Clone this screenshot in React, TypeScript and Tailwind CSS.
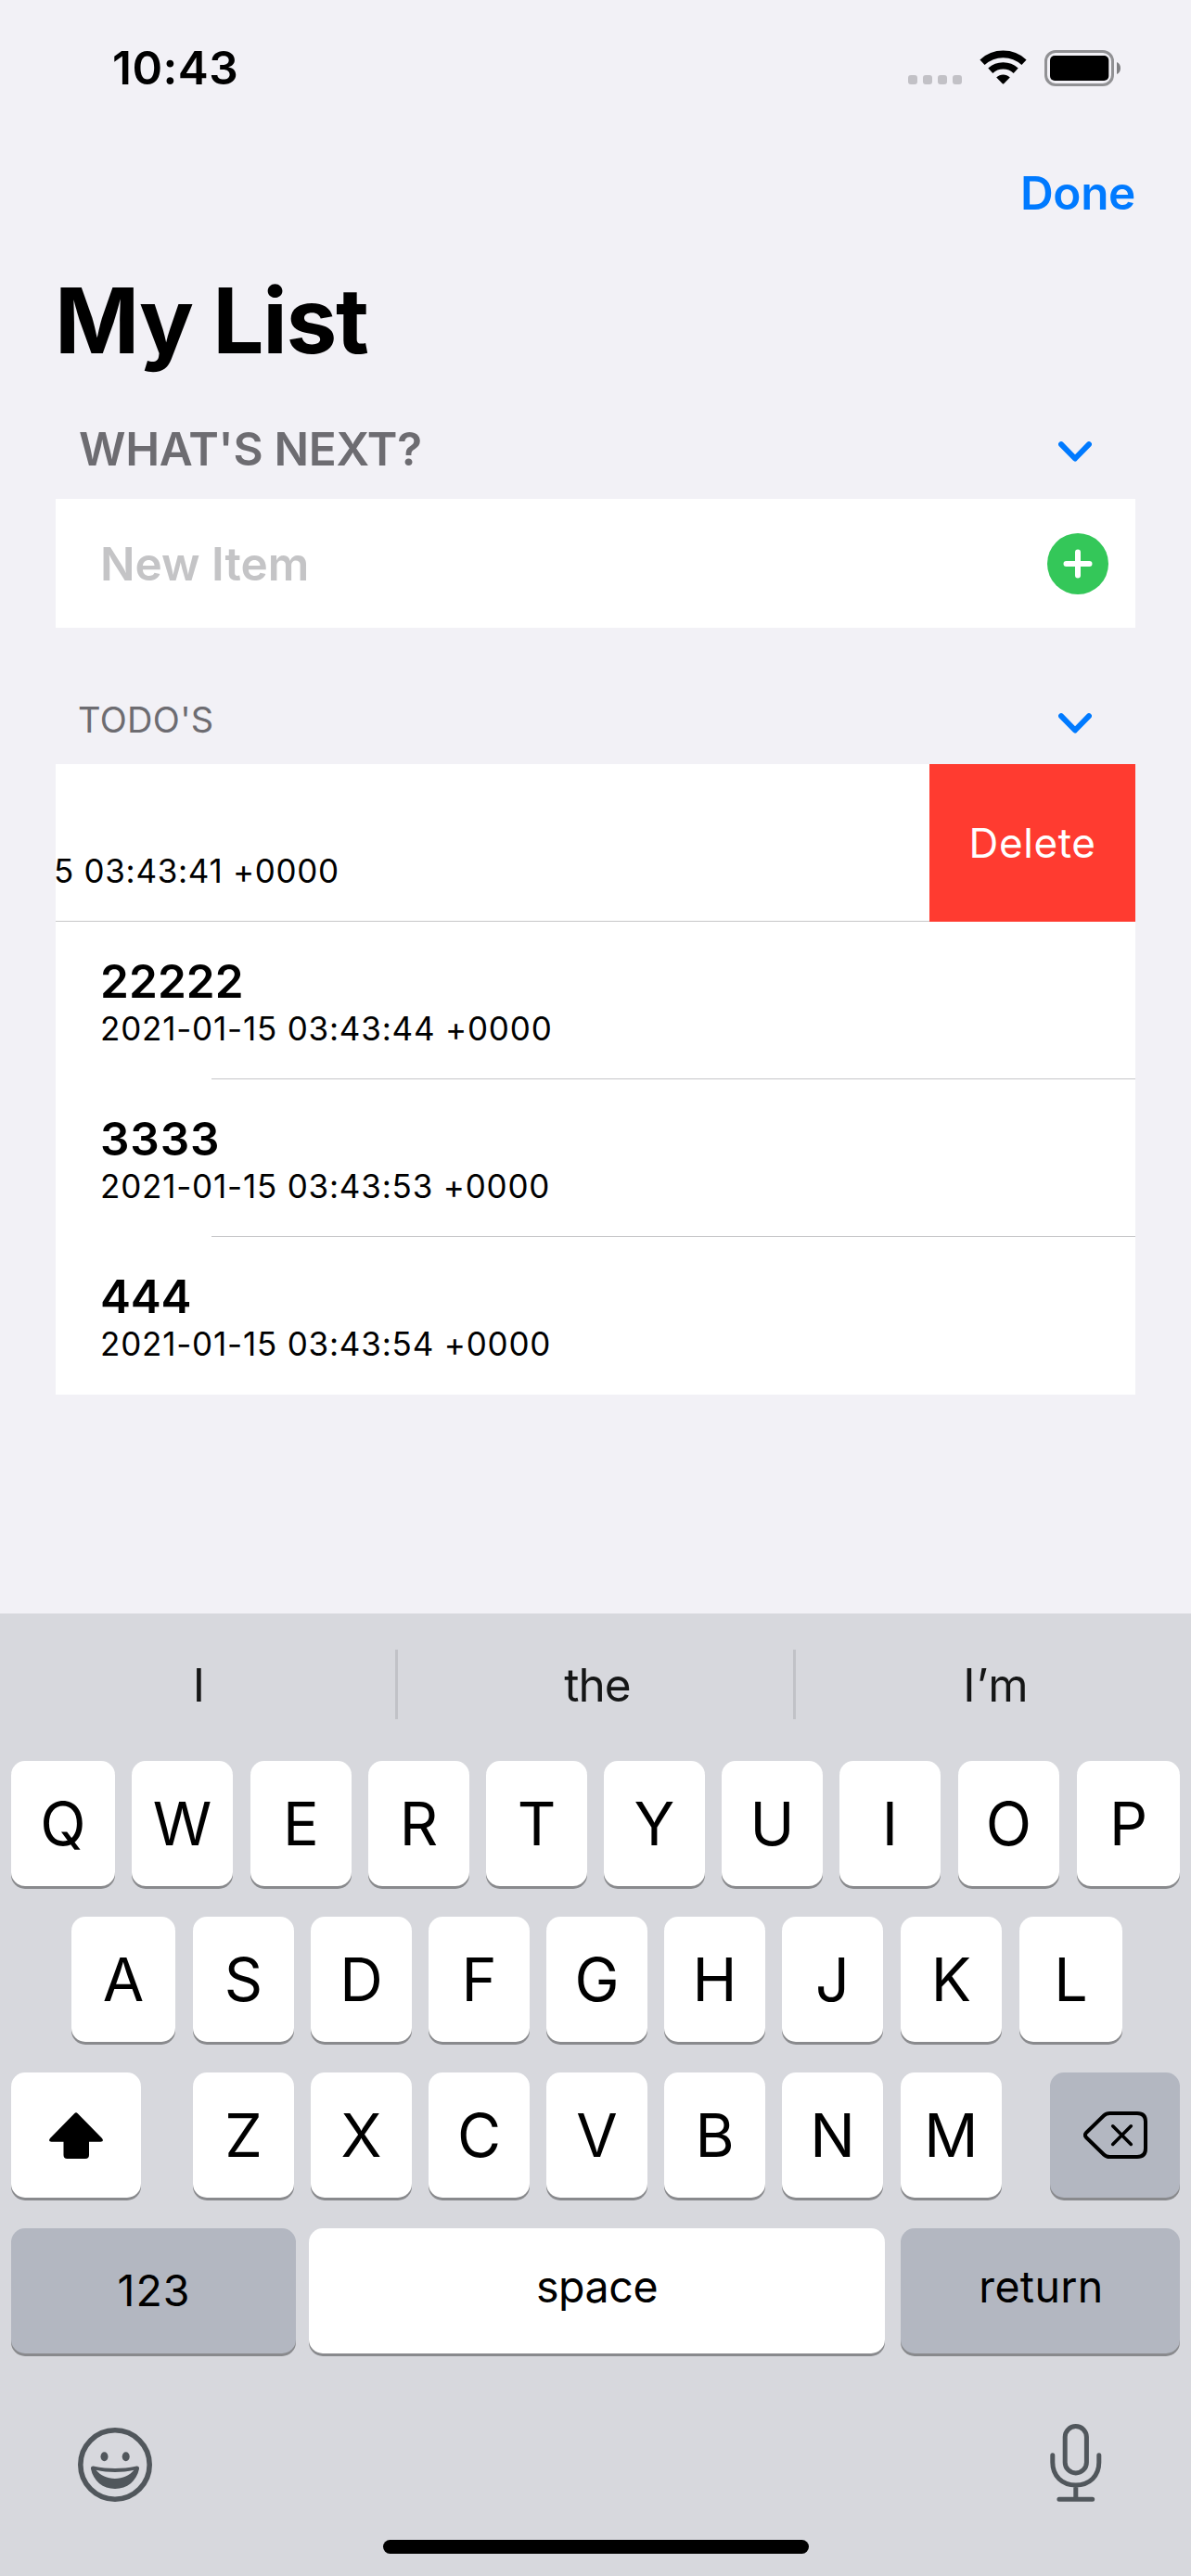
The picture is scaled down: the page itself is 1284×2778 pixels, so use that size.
import React from "react";
import clsx from "clsx";

const todos = [
  { title: "22222", date: "2021-01-15 03:43:44 +0000", spacing: "tracking-[0.1px]" },
  { title: "3333", date: "2021-01-15 03:43:53 +0000", spacing: "tracking-[0.84px]" },
  { title: "444", date: "2021-01-15 03:43:54 +0000", spacing: "tracking-[-0.2px]" },
];

function StatusBar() {
  return (
    <div className="flex h-[146px] items-center justify-between pl-[121px] pr-[76px]">
      <span className="text-[49.5px] leading-[60px] font-semibold tracking-[0.5px]">10:43</span>
      <div className="flex items-center">
        <div className="mt-[26px] flex gap-[6px]">
          {[0, 1, 2, 3].map((i) => (
            <span key={i} className="size-[10px] rounded-[3px] bg-[#c2c1c6]" />
          ))}
        </div>
        <svg className="ml-[19px] h-[38px] w-[51px]" viewBox="0 0 51 38" fill="none">
          <path d="M3 13.2C15.8 1.4 35.200 1.400 48 13.200" stroke="#000" strokeWidth="7.600" />
          <path d="M11.800 22.300C19.600 15.100 31.400 15.100 39.200 22.300" stroke="#000" strokeWidth="7.400" />
          <path d="M18.200 29.400C22.200 25.500 28.800 25.500 32.800 29.400L26.200 36.200Q25.500 36.900 24.800 36.200Z" fill="#000" />
        </svg>
        <svg className="ml-[19px] h-[39px] w-[82px]" viewBox="0 0 82 39">
          <rect x="1.500" y="1.500" width="72" height="36" rx="10.500" fill="none" stroke="#919194" strokeWidth="3" />
          <rect x="6" y="6" width="63.300" height="27" rx="5" fill="#000" />
          <path d="M78 13C80.600 14.100 82 16.500 82 19.500C82 22.500 80.600 24.900 78 26Z" fill="#7f7f82" />
        </svg>
      </div>
    </div>
  );
}

function Chevron() {
  return (
    <svg className="h-[22px] w-[36px]" viewBox="0 0 36 22" fill="none">
      <path d="M3 3.200L18 18.500L33 3.200" stroke="#007aff" strokeWidth="6" strokeLinecap="round" strokeLinejoin="round" />
    </svg>
  );
}

function Divider({ inset }: { inset?: boolean }) {
  return <div className={clsx("h-px bg-[#c6c6c8]", inset && "ml-[168px]")} />;
}

function Key({ children, className, dark }: { children: React.ReactNode; className?: string; dark?: boolean }) {
  return (
    <div
      className={clsx(
        "flex h-[135px] shrink-0 items-center justify-center rounded-[15px] shadow-[0_3px_0_#898a8d]",
        dark ? "bg-[#b3b7c1]" : "bg-white",
        className,
      )}
    >
      {children}
    </div>
  );
}

/* `nudged` lists the keys that sit one extra pixel away from their left neighbour. */
function LetterRow({
  letters,
  wideEnds,
  nudged,
  className,
}: {
  letters: string;
  wideEnds?: boolean;
  nudged: string;
  className?: string;
}) {
  return (
    <div className={clsx("flex gap-[18px] text-[64.5px]", className)}>
      {letters.split("").map((l, i) => (
        <Key
          key={l}
          className={clsx(
            "pt-px",
            wideEnds && i === 0 ? "w-[112px]" : wideEnds && i === letters.length - 1 ? "w-[111px]" : "w-[109px]",
            nudged.includes(l) && "ml-px",
          )}
        >
          {l}
        </Key>
      ))}
    </div>
  );
}

function Keyboard() {
  return (
    <div className="flex h-[1038px] flex-col bg-[#d7d8dd]">
      <div className="mb-[6px] flex h-[153px] items-center text-[49.5px] text-[#151616]">
        <span className="w-[426px] pt-px pl-[3px] text-center">I</span>
        <span className="h-[75px] w-[3px] bg-[#c1c2c7]" />
        <span className="w-[426px] pt-px pl-[4px] text-center tracking-[-0.93px]">the</span>
        <span className="h-[75px] w-[3px] bg-[#c1c2c7]" />
        <span className="w-[426px] pt-px pl-[6px] text-center tracking-[0.92px]">I’m</span>
      </div>
      <LetterRow letters="QWERTYUIOP" wideEnds nudged="EOP" className="mx-3" />
      <LetterRow letters="ASDFGHJKL" wideEnds nudged="SKL" className="mt-[33px] ml-[77px]" />
      <div className="mx-3 mt-[33px] flex justify-between">
        <Key className="w-[140px]">
          <svg className="h-[50px] w-[58px]" viewBox="0 0 58 50">
            <path d="M27.200 1.200Q29 -0.600 30.800 1.200L57 28Q59.500 31.800 55.500 31.800H43V46Q43 50 39 50H19.500Q15.500 50 15.500 46V31.800H2.500Q-1.500 31.800 1 28Z" fill="#000" />
          </svg>
        </Key>
        <LetterRow letters="ZXCVBNM" nudged="M" className="ml-1 w-[872px]" />
        <Key dark className="w-[140px]">
          <svg className="h-[51px] w-[69px]" viewBox="0 0 69 51" fill="none" stroke="#000" strokeLinecap="round" strokeLinejoin="round">
            <path d="M28.500 2H58Q67 2 67 11V40Q67 49 58 49H28.500Q24.500 49 22 46.500L3 28Q0.800 25.500 3 23L22 4.500Q24.500 2 28.500 2Z" strokeWidth="4" />
            <path d="M31.700 15.800L51.300 35.400M51.300 15.800L31.700 35.400" strokeWidth="3.600" />
          </svg>
        </Key>
      </div>
      <div className="mx-3 mt-[33px] flex text-[46.5px]">
        <Key dark className="w-[307px]">
          <span className="pl-px tracking-[1px]">123</span>
        </Key>
        <Key className="ml-[14px] w-[621px]">
          <span className="pb-[8px] tracking-[-0.41px]">space</span>
        </Key>
        <Key dark className="ml-[17px] w-[301px]">
          <span className="pb-[8px] pl-[2px] tracking-[0.34px]">return</span>
        </Key>
      </div>
      <div className="mt-[75px] flex items-center justify-between pr-[96px] pl-[84px]">
        <svg className="mt-[5px] h-[80px] w-[80px]" viewBox="0 0 80 80" fill="#51575c">
          <circle cx="40" cy="40" r="37.200" fill="none" stroke="#51575c" strokeWidth="5.600" />
          <ellipse cx="28.500" cy="31.300" rx="4" ry="5" />
          <ellipse cx="51.700" cy="31.300" rx="4" ry="5" />
          <path
            fillRule="evenodd"
            d="M14 44.500C13.600 42.200 15.500 41.100 17.700 41.800C32 44.800 48 44.800 62.300 41.800C64.500 41.100 66.400 42.200 66 44.500C63.300 57.500 53 66 40 66C27 66 16.700 57.500 14 44.500ZM19.500 45.800C24.500 51.800 31.500 54.900 40 54.900C48.500 54.900 55.500 51.800 60.500 45.800C47 48.800 33 48.800 19.500 45.800Z"
          />
        </svg>
        <svg className="h-[84px] w-[56px]" viewBox="0 0 56 84" fill="none" stroke="#51575c" strokeWidth="5" strokeLinecap="round">
          <rect x="16.200" y="2.500" width="23.200" height="50.500" rx="11.600" />
          <path d="M2.800 33.800V41.500C2.800 56 13 66 27.800 66C42.600 66 52.800 56 52.800 41.500V33.800M27.800 66V81M9.900 81.300H45.700" />
        </svg>
      </div>
      <div className="mt-auto mb-[24px] ml-[413px] h-[15px] w-[459px] rounded-full bg-black" />
    </div>
  );
}

export default function App() {
  return (
    <div className="flex h-[2778px] w-[1284px] flex-col overflow-hidden bg-[#f2f1f6] text-black [font-family:Inter,sans-serif]">
      <StatusBar />
      <div className="flex h-[124px] items-center justify-end pr-[60px]">
        <button className="text-[49.5px] font-semibold tracking-[-0.35px] text-[#007aff]">Done</button>
      </div>
      <h1 className="flex h-[150px] items-center pl-[59px] text-[98px] font-bold tracking-[-1.4px] whitespace-pre">My List</h1>

      <div className="flex h-[118px] items-center justify-between pt-[10px] pr-[107px] pl-[85px]">
        <h2 className="text-[49.5px] font-semibold tracking-[-0.3px] text-[#6d6c71]">WHAT'S NEXT?</h2>
        <div className="mt-[6px]">
          <Chevron />
        </div>
      </div>
      <div className="mx-[60px] flex h-[139px] items-center justify-between bg-white pr-[29px] pl-[48px]">
        <span className="pt-px text-[49.5px] font-semibold tracking-[0px] text-[#c4c4c6]">New Item</span>
        <svg className="h-[66px] w-[66px]" viewBox="0 0 66 66">
          <circle cx="33" cy="33" r="33" fill="#34c759" />
          <path d="M33 20.500V45.500M20.500 33H45.500" stroke="#fff" strokeWidth="6" strokeLinecap="round" />
        </svg>
      </div>

      <div className="flex h-[147px] items-center justify-between pt-[51px] pr-[107px] pl-[84px]">
        <h2 className="text-[38px] tracking-[0.3px] text-[#6d6c71]">TODO'S</h2>
        <div className="mt-[8px]">
          <Chevron />
        </div>
      </div>
      <div className="mx-[60px] bg-white">
        <div className="flex h-[170px]">
          <div className="flex flex-1 flex-col justify-between">
            <span className="-ml-[2px] pt-[88px] text-[35px] leading-[55px] tracking-[0.7px]">5 03:43:41 +0000</span>
            <Divider />
          </div>
          <button className="w-[222px] bg-[#ff3b30] text-[44px] tracking-[0.58px] text-white">Delete</button>
        </div>
        {todos.map((t, i) => (
          <div key={t.title} className="flex h-[170px] flex-col justify-between">
            <div className="flex flex-col pt-[40px] pl-[48px]">
              <span className={clsx("text-[49.5px] leading-[48px] font-semibold", t.spacing)}>{t.title}</span>
              <span className="text-[35px] leading-[55px] tracking-[0.8px]">{t.date}</span>
            </div>
            {i < todos.length - 1 && <Divider inset />}
          </div>
        ))}
      </div>
      <div className="mt-auto">
        <Keyboard />
      </div>
    </div>
  );
}
